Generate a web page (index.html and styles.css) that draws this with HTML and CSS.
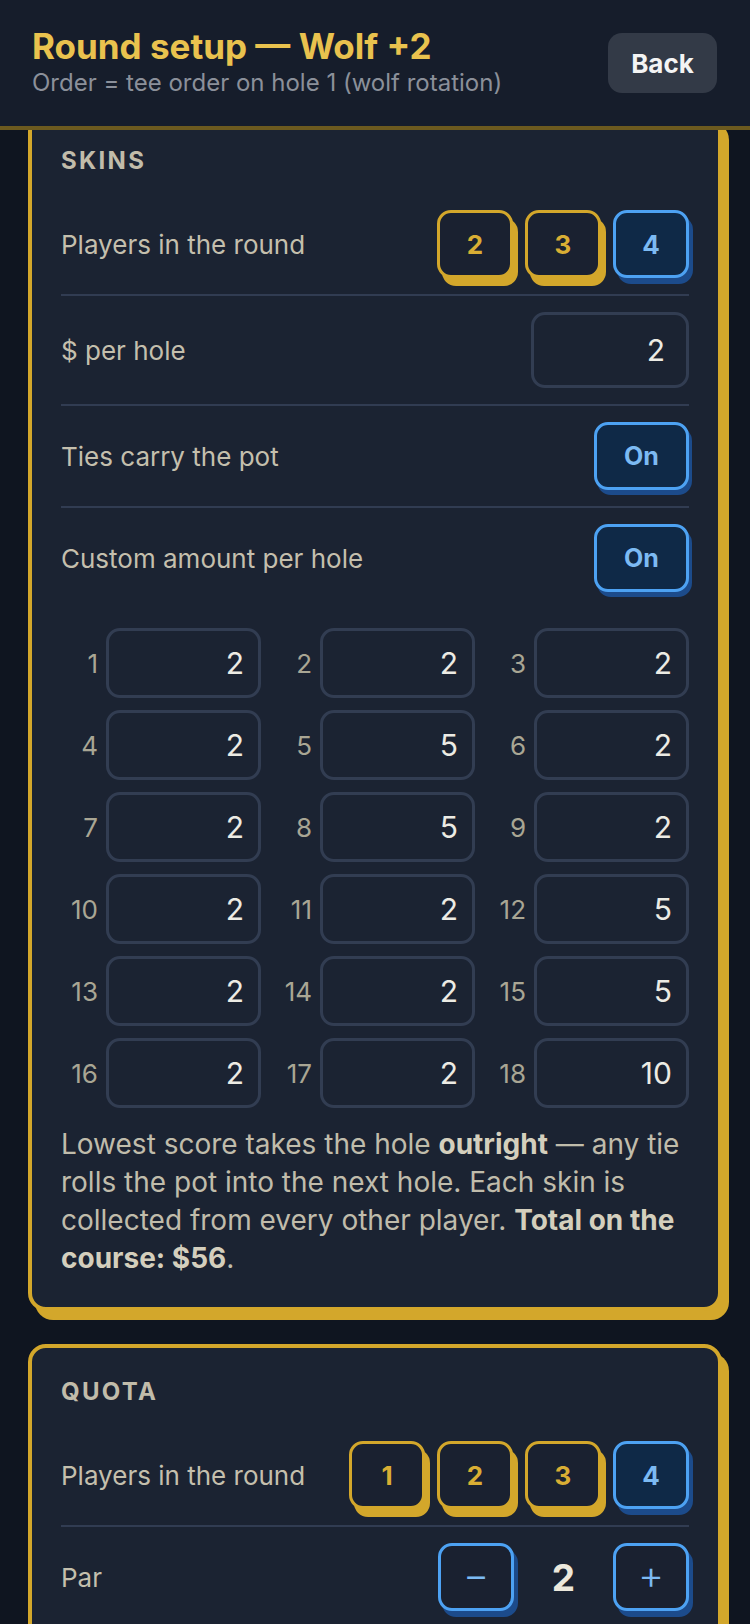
FILE: index.html
```html
<!DOCTYPE html>
<html lang="en">
<head>
<meta charset="utf-8">
<meta name="viewport" content="width=750">
<title>Round setup — Wolf +2</title>
<link rel="stylesheet" href="styles.css">
</head>
<body>
<header class="topbar">
  <div class="topbar-text">
    <h1 class="title">Round setup — Wolf +2</h1>
    <p class="subtitle">Order = tee order on hole 1 (wolf rotation)</p>
  </div>
  <button class="back" type="button">Back</button>
</header>

<main class="content">
  <section class="card">
    <h2 class="section-label">SKINS</h2>

    <div class="row">
      <span class="row-label">Players in the round</span>
      <div class="choices">
        <button class="choice" type="button">2</button>
        <button class="choice" type="button">3</button>
        <button class="choice is-on" type="button">4</button>
      </div>
    </div>

    <div class="row">
      <span class="row-label">$ per hole</span>
      <input class="money" type="text" value="2" size="3">
    </div>

    <div class="row">
      <span class="row-label">Ties carry the pot</span>
      <button class="toggle" type="button">On</button>
    </div>

    <div class="row row-plain">
      <span class="row-label">Custom amount per hole</span>
      <button class="toggle" type="button">On</button>
    </div>

    <div class="holes">
      <label class="hole"><span class="hole-num">1</span><input class="hole-input" type="text" value="2" size="3"></label>
      <label class="hole"><span class="hole-num">2</span><input class="hole-input" type="text" value="2" size="3"></label>
      <label class="hole"><span class="hole-num">3</span><input class="hole-input" type="text" value="2" size="3"></label>
      <label class="hole"><span class="hole-num">4</span><input class="hole-input" type="text" value="2" size="3"></label>
      <label class="hole"><span class="hole-num">5</span><input class="hole-input" type="text" value="5" size="3"></label>
      <label class="hole"><span class="hole-num">6</span><input class="hole-input" type="text" value="2" size="3"></label>
      <label class="hole"><span class="hole-num">7</span><input class="hole-input" type="text" value="2" size="3"></label>
      <label class="hole"><span class="hole-num">8</span><input class="hole-input" type="text" value="5" size="3"></label>
      <label class="hole"><span class="hole-num">9</span><input class="hole-input" type="text" value="2" size="3"></label>
      <label class="hole"><span class="hole-num">10</span><input class="hole-input" type="text" value="2" size="3"></label>
      <label class="hole"><span class="hole-num">11</span><input class="hole-input" type="text" value="2" size="3"></label>
      <label class="hole"><span class="hole-num">12</span><input class="hole-input" type="text" value="5" size="3"></label>
      <label class="hole"><span class="hole-num">13</span><input class="hole-input" type="text" value="2" size="3"></label>
      <label class="hole"><span class="hole-num">14</span><input class="hole-input" type="text" value="2" size="3"></label>
      <label class="hole"><span class="hole-num">15</span><input class="hole-input" type="text" value="5" size="3"></label>
      <label class="hole"><span class="hole-num">16</span><input class="hole-input" type="text" value="2" size="3"></label>
      <label class="hole"><span class="hole-num">17</span><input class="hole-input" type="text" value="2" size="3"></label>
      <label class="hole"><span class="hole-num">18</span><input class="hole-input" type="text" value="10" size="3"></label>
    </div>

    <p class="note">Lowest score takes the hole <strong>outright</strong> — any tie rolls the pot into the next hole. Each skin is collected from every other player. <strong>Total on the course: $56</strong>.</p>
  </section>

  <section class="card">
    <h2 class="section-label">QUOTA</h2>

    <div class="row">
      <span class="row-label">Players in the round</span>
      <div class="choices">
        <button class="choice" type="button">1</button>
        <button class="choice" type="button">2</button>
        <button class="choice" type="button">3</button>
        <button class="choice is-on" type="button">4</button>
      </div>
    </div>

    <div class="row row-plain">
      <span class="row-label">Par</span>
      <div class="stepper">
        <button class="step" type="button">−</button>
        <span class="step-value">2</span>
        <button class="step" type="button">+</button>
      </div>
    </div>
  </section>
</main>
</body>
</html>
```

FILE: styles.css
```css
html, body {
  margin: 0;
  padding: 0;
}

body {
  height: 1624px;
  overflow: hidden;
  background: #0f1520;
  font-family: Inter, "Noto Sans", "Liberation Sans", sans-serif;
  color: #c2bdac;
}

.topbar {
  position: relative;
  z-index: 2;
  height: 126px;
  padding: 0 33px 0 32px;
  background: #161d2b;
  border-bottom: 4px solid #6c5a1f;
  display: flex;
  align-items: center;
  justify-content: space-between;
}

.topbar-text {
  margin-top: -2px;
}

.title {
  margin: 0;
  font-size: 35px;
  line-height: 40px;
  font-weight: 700;
  color: #e9c24e;
}

.subtitle {
  margin: 2px 0 0;
  font-size: 24px;
  line-height: 30px;
  color: #8b909a;
}

.back {
  width: 109px;
  height: 60px;
  border: none;
  border-radius: 14px;
  background: #333a47;
  color: #f4f4f4;
  font-family: inherit;
  font-size: 26px;
  font-weight: 700;
}

.content {
  position: relative;
  z-index: 1;
  margin-top: -17px;
  padding: 0 28px;
  display: flex;
  flex-direction: column;
  gap: 33px;
}

.card {
  background: #1b2332;
  border: 4px solid #d3a72b;
  border-radius: 18px;
  box-shadow: 7px 9px 0 #d3a72b;
  padding: 30px 29px;
}

.section-label {
  margin: 0 0 19px;
  font-size: 24px;
  line-height: 28px;
  font-weight: 700;
  letter-spacing: 2.3px;
  color: #c1bcaa;
}

.row {
  display: flex;
  align-items: center;
  justify-content: space-between;
  padding: 16px 0;
  border-bottom: 2px solid #313c52;
}

.row-plain {
  border-bottom: none;
}

.row-label {
  font-size: 26px;
  color: #c4bfad;
}

.choices {
  display: flex;
  gap: 12px;
}

.choice {
  width: 76px;
  height: 68px;
  box-sizing: border-box;
  border: 3px solid #d3a72b;
  border-radius: 14px;
  background: #1a2130;
  box-shadow: 5px 8px 0 #d3a72b;
  color: #d9ae34;
  font-family: inherit;
  font-size: 26px;
  font-weight: 700;
}

.choice.is-on {
  border-color: #4da2f3;
  background: #0f2947;
  color: #7cbaf3;
  box-shadow: 4px 6px 0 #1c4b8b;
}

.money {
  width: 158px;
  height: 76px;
  box-sizing: border-box;
  border: 3px solid #323d52;
  border-radius: 14px;
  background: transparent;
  padding: 0 21px;
  color: #ecebe4;
  font-family: inherit;
  font-size: 30px;
  text-align: right;
  outline: none;
}

.toggle {
  width: 95px;
  height: 68px;
  box-sizing: border-box;
  border: 3px solid #4da2f3;
  border-radius: 14px;
  background: #0f2947;
  box-shadow: 3px 5px 0 #1c4b8b;
  color: #7cbaf3;
  font-family: inherit;
  font-size: 25px;
  font-weight: 700;
}

.holes {
  margin-top: 20px;
  display: grid;
  grid-template-columns: repeat(3, minmax(0, 1fr));
  column-gap: 14px;
  row-gap: 12px;
}

.hole {
  display: flex;
  align-items: center;
  gap: 8px;
  min-width: 0;
}

.hole-num {
  width: 37px;
  flex: none;
  text-align: right;
  font-size: 26px;
  color: #a9a694;
}

.hole-input {
  flex: 1 1 0;
  width: 0;
  min-width: 0;
  height: 70px;
  box-sizing: border-box;
  border: 3px solid #323d52;
  border-radius: 14px;
  background: transparent;
  padding: 0 14px;
  color: #ecebe4;
  font-family: inherit;
  font-size: 30px;
  text-align: right;
  outline: none;
}

.note {
  margin: 17px 0 0;
  font-size: 28px;
  line-height: 38px;
  color: #c0bcab;
}

.note strong {
  font-weight: 700;
  color: #d4cfbd;
}

.stepper {
  display: flex;
  align-items: center;
  gap: 12px;
}

.step {
  width: 76px;
  height: 68px;
  box-sizing: border-box;
  border: 3px solid #4da2f3;
  border-radius: 14px;
  background: #1a2130;
  box-shadow: 4px 6px 0 #1c4b8b;
  color: #7cbaf3;
  font-family: inherit;
  font-size: 40px;
  font-weight: 300;
  line-height: 1;
  padding: 0 0 4px;
}

.step-value {
  width: 75px;
  text-align: center;
  font-size: 37px;
  font-weight: 700;
  color: #ece8dc;
}
```
